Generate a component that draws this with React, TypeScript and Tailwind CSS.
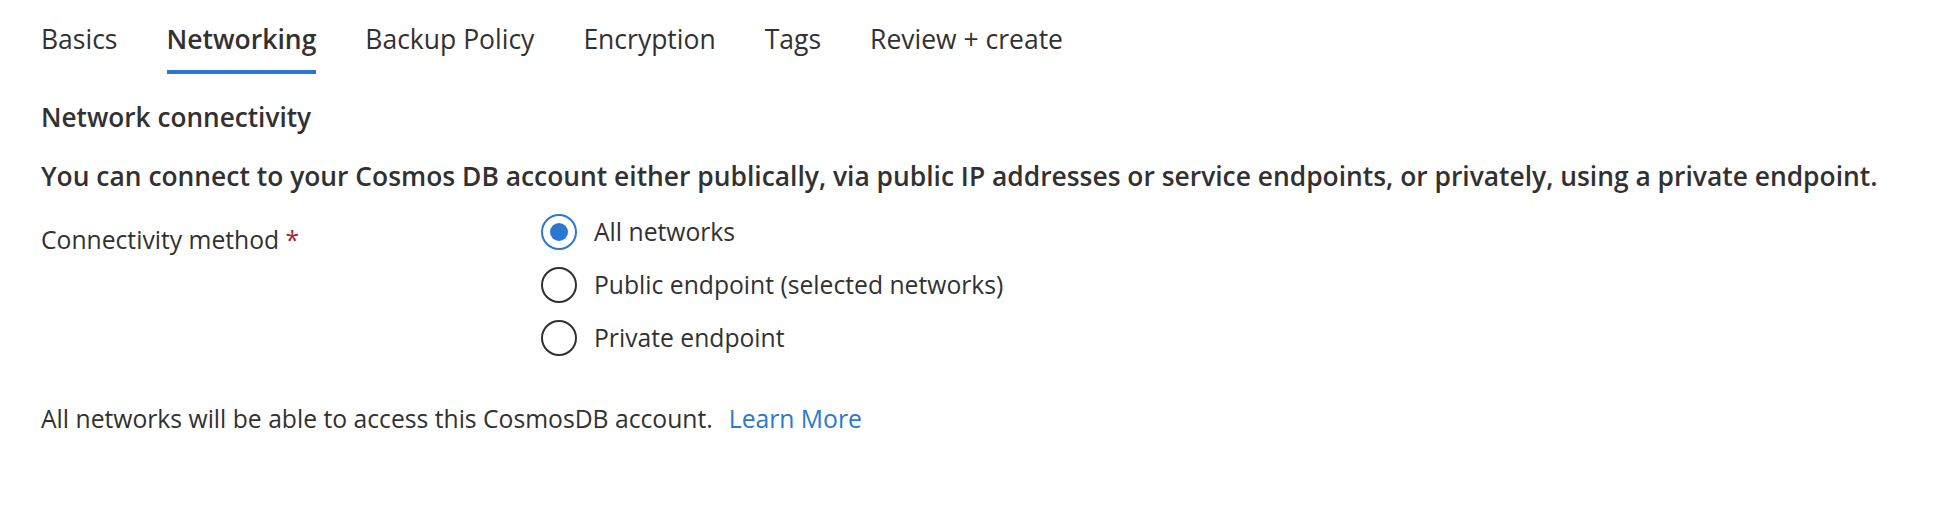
import React, { useState } from 'react';

const tabs = ['Basics', 'Networking', 'Backup Policy', 'Encryption', 'Tags', 'Review + create'];

const options = [
  { id: 'all', label: 'All networks' },
  { id: 'public', label: 'Public endpoint (selected networks)' },
  { id: 'private', label: 'Private endpoint' },
];

const Radio: React.FC<{ checked: boolean; label: string; onClick: () => void }> = ({ checked, label, onClick }) => (
  <div onClick={onClick} className="flex items-center h-[53px] cursor-pointer">
    <span
      className={`w-[36px] h-[36px] rounded-full border-[2.5px] flex items-center justify-center shrink-0 ${
        checked ? 'border-[#2b78d0]' : 'border-[#323130]'
      }`}
    >
      {checked && <span className="w-[18px] h-[18px] rounded-full bg-[#2b78d0]" />}
    </span>
    <span className="ml-[17px] leading-[34px]">{label}</span>
  </div>
);

export default function App() {
  const [active, setActive] = useState('Networking');
  const [method, setMethod] = useState('all');

  return (
    <div
      className="w-[1960px] h-[530px] bg-white text-[#323130] text-[24.7px] pl-[41px]"
      style={{ fontFamily: '"Segoe UI", "Open Sans", sans-serif' }}
    >
      <div className="flex gap-[49px] pt-[22px] text-[26.5px]">
        {tabs.map((t) => (
          <div key={t} onClick={() => setActive(t)} className="flex flex-col cursor-pointer">
            <span className={`leading-[34px] ${active === t ? 'font-semibold' : ''}`}>{t}</span>
            <span className={`mt-[14px] h-[4px] ${active === t ? 'bg-[#2b78d0]' : 'bg-transparent'}`} />
          </div>
        ))}
      </div>

      <h2 className="mt-[26px] leading-[34px] font-semibold text-[26.2px]">Network connectivity</h2>

      <p className="mt-[25px] leading-[34px] font-semibold text-[26.4px] whitespace-nowrap">
        You can connect to your Cosmos DB account either publically, via public IP addresses or service endpoints, or privately, using a private endpoint.
      </p>

      <div className="flex mt-[12px]">
        <div className="w-[500px] pt-[18px] leading-[34px]">
          Connectivity method <span className="text-[#a4262c]">*</span>
        </div>
        <div className="flex flex-col">
          {options.map((o) => (
            <Radio key={o.id} checked={method === o.id} label={o.label} onClick={() => setMethod(o.id)} />
          ))}
        </div>
      </div>

      <div className="mt-[38px] leading-[34px]">
        All networks will be able to access this CosmosDB account.
        <a href="#" className="ml-[16px] text-[#2b78d0]">Learn More</a>
      </div>
    </div>
  );
}
